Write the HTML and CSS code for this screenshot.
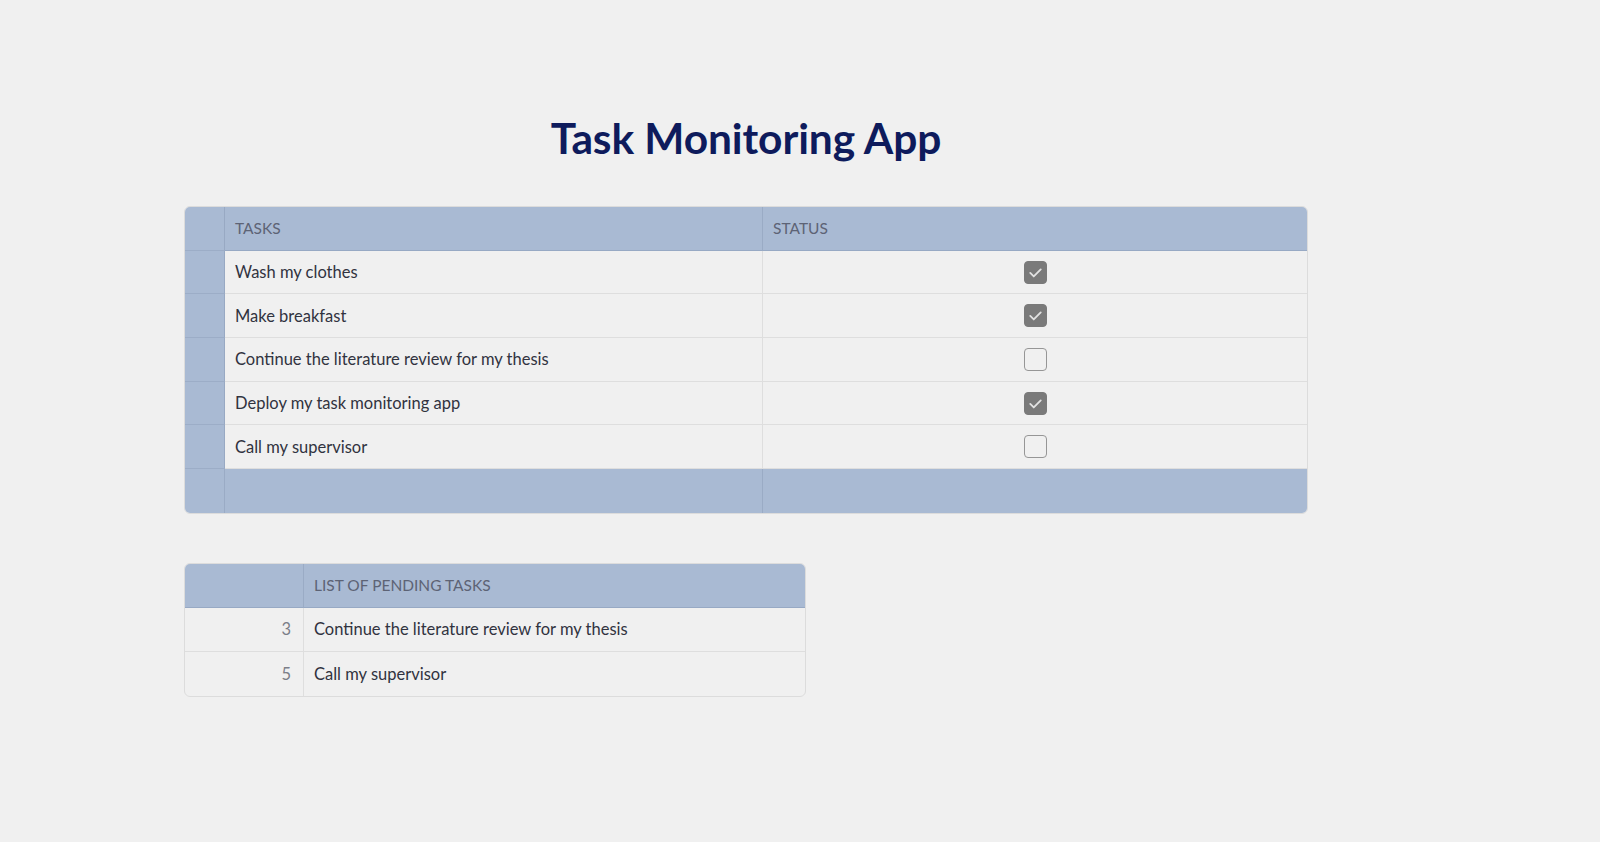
FILE: index.html
```html
<!DOCTYPE html>
<html>
<head>
<meta charset="utf-8">
<title>Task Monitoring App</title>
<link rel="stylesheet" href="styles.css">
</head>
<body>
<main class="page">
  <h1 class="title">Task Monitoring App</h1>

  <div class="grid tasks-grid">
    <div class="cell idx head"></div>
    <div class="cell head">TASKS</div>
    <div class="cell head">STATUS</div>

    <div class="cell idx"></div>
    <div class="cell">Wash my clothes</div>
    <div class="cell center"><span class="box checked"><svg viewBox="0 0 24 24"><path d="M6 12.5l4 4L18 8.5"/></svg></span></div>

    <div class="cell idx"></div>
    <div class="cell">Make breakfast</div>
    <div class="cell center"><span class="box checked"><svg viewBox="0 0 24 24"><path d="M6 12.5l4 4L18 8.5"/></svg></span></div>

    <div class="cell idx"></div>
    <div class="cell">Continue the literature review for my thesis</div>
    <div class="cell center"><span class="box"></span></div>

    <div class="cell idx"></div>
    <div class="cell">Deploy my task monitoring app</div>
    <div class="cell center"><span class="box checked"><svg viewBox="0 0 24 24"><path d="M6 12.5l4 4L18 8.5"/></svg></span></div>

    <div class="cell idx"></div>
    <div class="cell">Call my supervisor</div>
    <div class="cell center"><span class="box"></span></div>

    <div class="cell idx foot last"></div>
    <div class="cell foot last"></div>
    <div class="cell foot last"></div>
  </div>

  <div class="grid pending-grid">
    <div class="cell head"></div>
    <div class="cell head">LIST OF PENDING TASKS</div>

    <div class="cell num">3</div>
    <div class="cell">Continue the literature review for my thesis</div>

    <div class="cell num last">5</div>
    <div class="cell last">Call my supervisor</div>
  </div>
</main>
</body>
</html>
```

FILE: styles.css
```css
html, body {
  margin: 0;
  padding: 0;
  background: #f0f0f0;
}

body {
  font-family: Lato, "Source Sans Pro", "Liberation Sans", sans-serif;
  color: #31333f;
}

.page {
  width: 1124px;
  padding: 103px 0 0 184px;
}

.title {
  margin: 0 0 33px 0;
  text-align: center;
  font-size: 42.5px;
  font-weight: 700;
  line-height: 70px;
  color: #0e1b5c;
  letter-spacing: -0.1px;
}

.grid {
  display: grid;
  border: 1px solid #dcdcdc;
  border-radius: 6px;
  overflow: hidden;
  font-size: 16.5px;
}

.tasks-grid {
  width: 1122px;
  grid-template-columns: 40px 538px 1fr;
  grid-auto-rows: 43.7px;
}

.pending-grid {
  margin-top: 49px;
  width: 620px;
  grid-template-columns: 119px 1fr;
  grid-auto-rows: 44px;
}

.cell {
  display: flex;
  align-items: center;
  padding: 0 10px;
  border-bottom: 1px solid #dedede;
  border-right: 1px solid #dedede;
  white-space: nowrap;
  box-sizing: border-box;
}

.cell:nth-child(3n) {
  border-right: none;
}

.pending-grid .cell:nth-child(3n) {
  border-right: 1px solid #dedede;
}

.pending-grid .cell:nth-child(2n) {
  border-right: none;
}

.cell.head {
  background: #a9bad3;
  color: #5d6375;
  font-size: 15.5px;
  border-bottom: 1px solid #97a9c4;
  border-right: 1px solid #9aabc5;
}

.tasks-grid .cell.head:nth-child(3n),
.pending-grid .cell.head:nth-child(2n) {
  border-right: none;
}

.cell.idx {
  background: #a9bad3;
  border-right: 1px solid #98a9c3;
  border-bottom: 1px solid #9cadc7;
  padding: 0;
}

.cell.foot {
  background: #a9bad3;
  border-bottom: none;
  border-right: 1px solid #9aabc5;
}

.cell.foot:nth-child(3n) {
  border-right: none;
}

.cell.last {
  border-bottom: none;
}

.cell.center {
  justify-content: center;
}

.cell.num {
  justify-content: flex-end;
  color: #7b7e88;
  padding-right: 12px;
}

.box {
  width: 23px;
  height: 23px;
  border: 1.5px solid #969696;
  border-radius: 4px;
  box-sizing: border-box;
  display: flex;
  align-items: center;
  justify-content: center;
}

.box.checked {
  background: #7a7a7a;
  border-color: #7a7a7a;
}

.box svg {
  width: 21px;
  height: 21px;
  fill: none;
  stroke: #e2e2e2;
  stroke-width: 2.1;
  stroke-linecap: round;
  stroke-linejoin: round;
}
```
